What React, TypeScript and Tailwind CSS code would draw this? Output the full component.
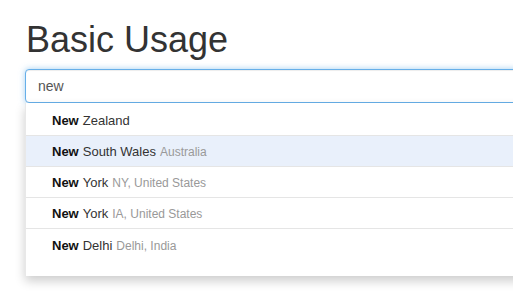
import React from 'react';

type Suggestion = {
  name: string;
  detail?: string;
};

const suggestions: Suggestion[] = [
  { name: 'Zealand' },
  { name: 'South Wales', detail: 'Australia' },
  { name: 'York', detail: 'NY, United States' },
  { name: 'York', detail: 'IA, United States' },
  { name: 'Delhi', detail: 'Delhi, India' },
];

export default function App() {
  const activeIndex = 1;

  return (
    <div
      className="w-screen h-screen overflow-hidden bg-white text-[#333]"
      style={{ fontFamily: '"Liberation Sans", Arial, sans-serif' }}
    >
      <div className="pl-[25px] pt-[18px] w-[640px]">
        <h1 className="text-[36px] leading-[44px] font-normal pl-[1px] mb-[7px]">Basic Usage</h1>

        <div className="relative">
          <div className="h-[34px] rounded-[4px] border border-[#66afe9] bg-white flex items-center pl-[12px] text-[14px] text-[#555] shadow-[inset_0_1px_1px_rgba(0,0,0,0.075),0_0_6px_rgba(102,175,233,0.6)]">
            new
          </div>

          <ul className="bg-white border-l border-[#e8e8e8] shadow-[0_5px_10px_rgba(0,0,0,0.2)] pt-[2px] pb-[16px] text-[13px]">
            {suggestions.map((s, i) => (
              <li
                key={i}
                className={`h-[31px] flex items-center pl-[26px] pt-[2px] ${
                  i < suggestions.length - 1 ? 'border-b border-[#e5e5e5]' : ''
                } ${i === activeIndex ? 'bg-[#e9f0fb]' : ''}`}
              >
                <span className="font-bold text-[#111]">New</span>
                <span className="ml-[4px] text-[#333]">{s.name}</span>
                {s.detail && <span className="ml-[4px] text-[12px] text-[#999]">{s.detail}</span>}
              </li>
            ))}
          </ul>
        </div>
      </div>
    </div>
  );
}
